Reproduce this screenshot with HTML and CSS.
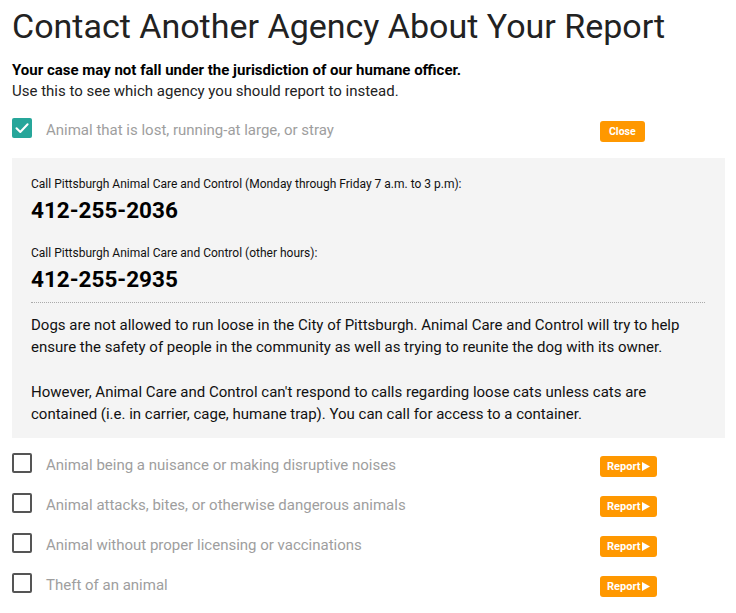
FILE: index.html
```html
<!DOCTYPE html>
<html lang="en">
<head>
<meta charset="utf-8">
<title>Contact Another Agency About Your Report</title>
<link rel="stylesheet" href="styles.css">
</head>
<body>
<div class="page">
  <h1 class="title">Contact Another Agency About Your Report</h1>
  <div class="intro">
    <p class="intro-strong">Your case may not fall under the jurisdiction of our humane officer.</p>
    <p class="intro-text">Use this to see which agency you should report to instead.</p>
  </div>

  <div class="row row-first">
    <span class="box box-checked">
      <svg width="20" height="20" viewBox="0 0 20 20"><path d="M4.5 10.2 L8.3 14 L15.6 6.2" fill="none" stroke="#fff" stroke-width="2" stroke-linecap="round" stroke-linejoin="round"/></svg>
    </span>
    <span class="label">Animal that is lost, running-at large, or stray</span>
    <button class="btn btn-close">Close</button>
  </div>

  <div class="panel">
    <div class="contacts">
      <p class="call-label">Call Pittsburgh Animal Care and Control (Monday through Friday 7 a.m. to 3 p.m):</p>
      <p class="phone phone-first">412-255-2036</p>
      <p class="call-label">Call Pittsburgh Animal Care and Control (other hours):</p>
      <p class="phone">412-255-2935</p>
    </div>
    <p class="para">Dogs are not allowed to run loose in the City of Pittsburgh. Animal Care and Control will try to help ensure the safety of people in the community as well as trying to reunite the dog with its owner.</p>
    <p class="para para-second">However, Animal Care and Control can't respond to calls regarding loose cats unless cats are contained (i.e. in carrier, cage, humane trap). You can call for access to a container.</p>
  </div>

  <div class="rows">
    <div class="row">
      <span class="box"></span>
      <span class="label">Animal being a nuisance or making disruptive noises</span>
      <button class="btn btn-report">Report<svg class="tri" width="8" height="9" viewBox="0 0 8 9"><path d="M0 0 L8 4.5 L0 9 Z" fill="#fff"/></svg></button>
    </div>
    <div class="row">
      <span class="box"></span>
      <span class="label">Animal attacks, bites, or otherwise dangerous animals</span>
      <button class="btn btn-report">Report<svg class="tri" width="8" height="9" viewBox="0 0 8 9"><path d="M0 0 L8 4.5 L0 9 Z" fill="#fff"/></svg></button>
    </div>
    <div class="row">
      <span class="box"></span>
      <span class="label">Animal without proper licensing or vaccinations</span>
      <button class="btn btn-report">Report<svg class="tri" width="8" height="9" viewBox="0 0 8 9"><path d="M0 0 L8 4.5 L0 9 Z" fill="#fff"/></svg></button>
    </div>
    <div class="row">
      <span class="box"></span>
      <span class="label">Theft of an animal</span>
      <button class="btn btn-report">Report<svg class="tri" width="8" height="9" viewBox="0 0 8 9"><path d="M0 0 L8 4.5 L0 9 Z" fill="#fff"/></svg></button>
    </div>
  </div>
</div>
</body>
</html>
```
FILE: styles.css
```css
html, body {
  margin: 0;
  padding: 0;
  background: #fff;
}
body {
  font-family: Roboto, "Liberation Sans", Arial, sans-serif;
  color: #212121;
}
.page {
  margin: 0 11px 0 12px;
}
p {
  margin: 0;
}
.title {
  margin: 5px 0 0;
  font-size: 34px;
  line-height: 42px;
  font-weight: 400;
  color: #222;
}
.intro {
  margin-top: 13px;
  font-size: 15px;
  line-height: 21px;
}
.intro-strong {
  font-weight: 700;
  color: #000;
}
.intro-text {
  color: #222;
}
.row {
  display: flex;
  align-items: center;
  height: 40px;
}
.row-first {
  margin-top: 6px;
}
.box {
  flex: 0 0 auto;
  width: 20px;
  height: 20px;
  box-sizing: border-box;
  border: 2px solid #555;
  border-radius: 2px;
  margin-right: 14px;
  display: flex;
}
.box-checked {
  border: none;
  background: #26a69a;
}
.label {
  width: 554px;
  font-size: 15px;
  line-height: 20px;
  color: #9e9e9e;
  margin-top: 4px;
}
.btn {
  margin-top: 6px;
  height: 21px;
  border: none;
  border-radius: 3px;
  background: #ff9800;
  color: #fff;
  font-family: Roboto, "Liberation Sans", Arial, sans-serif;
  font-weight: 700;
  font-size: 11px;
  line-height: 21px;
  display: flex;
  align-items: center;
  cursor: pointer;
}
.btn-close {
  padding: 0 9px 0 9px;
  font-size: 10.5px;
}
.btn-report {
  padding: 0 7px 0 7px;
}
.tri {
  margin-left: 2px;
}
.panel {
  margin-top: 10px;
  background: #f4f4f4;
  padding: 17px 20px 13px 19px;
}
.contacts {
  border-bottom: 1px dotted #aaa;
  padding-bottom: 8px;
}
.call-label {
  font-size: 12px;
  line-height: 18px;
  color: #111;
}
.phone {
  margin-top: 2px;
  font-size: 22.5px;
  line-height: 30px;
  font-weight: 700;
  color: #000;
}
.phone-first {
  margin-bottom: 19px;
}
.para {
  margin-top: 11px;
  font-size: 15px;
  line-height: 22px;
  color: #111;
}
.para-second {
  margin-top: 23px;
}
.rows {
  margin-top: 5px;
}
```
